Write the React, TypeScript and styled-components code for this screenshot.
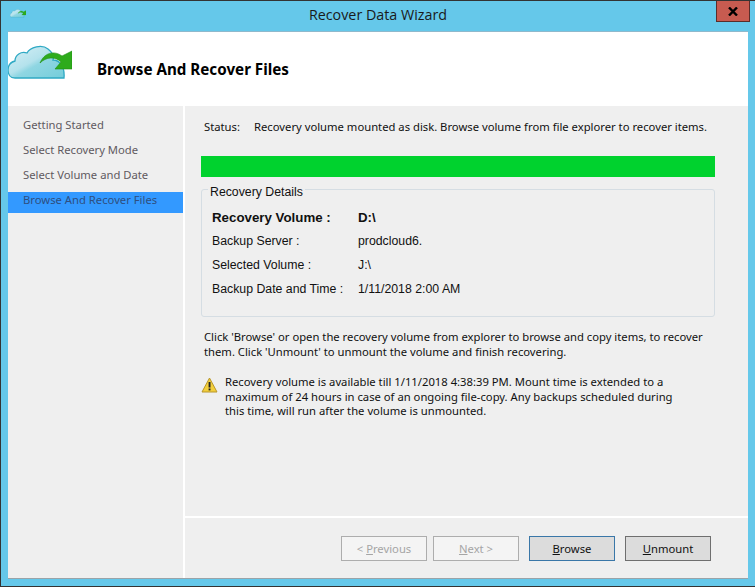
import { FC, Fragment } from 'react';
import styled, { createGlobalStyle } from 'styled-components';

const FRAME_BLUE = '#65c8ea';
const PANEL_GREY = '#efefef';
const UI_FONT = `'Noto Sans', 'Open Sans', sans-serif`;
const DETAIL_FONT = `'Liberation Sans', Arial, sans-serif`;

const GlobalStyle = createGlobalStyle`
  html, body {
    margin: 0;
    padding: 0;
    background: ${FRAME_BLUE};
  }
`;

const Window = styled.div`
  width: 755px;
  height: 587px;
  box-sizing: border-box;
  border: 1px solid #333;
  border-right: none;
  background: ${FRAME_BLUE};
  display: flex;
  flex-direction: column;
  overflow: hidden;
  font-family: ${UI_FONT};
`;

const TitleBar = styled.div`
  height: 30px;
  flex: none;
  display: grid;
  grid-template-columns: 1fr auto 1fr;
  align-items: start;
`;

const TitleIconSlot = styled.div`
  padding: 8px 0 0 9px;
  line-height: 0;
`;

const TitleText = styled.div`
  font-family: 'Open Sans', ${UI_FONT};
  font-size: 14.3px;
  line-height: 18px;
  margin-top: 5px;
  color: #1a1a1a;
`;

const CloseButton = styled.div`
  justify-self: end;
  margin-right: 5px;
  width: 34px;
  height: 21px;
  box-sizing: border-box;
  background: #c75b50;
  border: 1px solid #5a2d2a;
  border-top: none;
  display: flex;
  align-items: center;
  justify-content: center;
`;

const Client = styled.div`
  flex: 1;
  margin: 0 7px 7px 7px;
  border-top: 1px solid #8fb9cc;
  border-bottom: 1px solid #9aa3a8;
  background: #fff;
  display: flex;
  flex-direction: column;
  min-height: 0;
`;

const Header = styled.div`
  height: 74px;
  flex: none;
  display: flex;
  align-items: flex-start;
  background: #fff;
`;

const HeaderIconSlot = styled.div`
  width: 89px;
  padding-top: 13px;
  line-height: 0;
`;

const HeaderTitle = styled.h1`
  margin: 0;
  padding-top: 27px;
  font-family: ${UI_FONT};
  font-size: 15.2px;
  line-height: 20px;
  font-weight: 700;
  color: #000;
`;

const Body = styled.div`
  flex: 1;
  display: flex;
  gap: 2px;
  min-height: 0;
`;

const Sidebar = styled.nav`
  width: 175px;
  flex: none;
  background: ${PANEL_GREY};
  padding-top: 11px;
  box-sizing: border-box;
`;

const Step = styled.div<{ $active?: boolean }>`
  height: 21px;
  line-height: 16px;
  margin-bottom: 4px;
  padding-left: 15px;
  font-size: 11.25px;
  white-space: nowrap;
  color: ${({ $active }) => ($active ? '#2f4f80' : '#5f5a5f')};
  background: ${({ $active }) => ($active ? '#3399ff' : 'transparent')};
`;

const Main = styled.div`
  flex: 1;
  display: flex;
  flex-direction: column;
  min-width: 0;
`;

const Content = styled.div`
  flex: 1;
  background: ${PANEL_GREY};
  padding: 12px 33px 0 16px;
  font-size: 11.25px;
  color: #111;
`;

const StatusRow = styled.div`
  display: flex;
  line-height: 17px;
  padding-left: 3px;
  white-space: nowrap;
`;

const StatusLabel = styled.span`
  flex: none;
  width: 50px;
`;

const ProgressBar = styled.div`
  height: 21px;
  margin-top: 21px;
  background: #00d22e;
`;

const Details = styled.fieldset`
  margin: 7px 0 0;
  padding: 0 0 0 10px;
  height: 133px;
  box-sizing: border-box;
  border: 1px solid #d5dde3;
  border-radius: 3px;
  font-family: ${DETAIL_FONT};
  font-size: 12.3px;
  color: #111;
`;

const DetailsLegend = styled.legend`
  margin-left: -4px;
  padding: 0 2px;
  height: 10px;
  line-height: 16px;
  font-size: 12.3px;
`;

const DetailsGrid = styled.div`
  display: grid;
  grid-template-columns: 146px 1fr;
  grid-auto-rows: 24px;
  align-items: center;
  padding-top: 11px;
`;

const DetailCell = styled.div<{ $bold?: boolean }>`
  font-weight: ${({ $bold }) => ($bold ? 700 : 400)};
  font-size: ${({ $bold }) => ($bold ? '13.3px' : '12.3px')};
  white-space: nowrap;
`;

const Paragraph = styled.p`
  margin: 12px 0 0;
  padding-left: 3px;
  line-height: 15px;
  width: 512px;
`;

const Warning = styled.div`
  display: flex;
  margin-top: 16px;
`;

const WarningIconSlot = styled.div`
  width: 24px;
  flex: none;
  padding-top: 2px;
  line-height: 0;
`;

const WarningText = styled.div`
  line-height: 14.5px;
  width: 460px;
`;

const Footer = styled.div`
  height: 61px;
  flex: none;
  margin-top: 1px;
  border-top: 1px solid #fff;
  background: ${PANEL_GREY};
  box-sizing: border-box;
  padding: 18px 37px 0 0;
  display: flex;
  justify-content: flex-end;
`;

const WizardButton = styled.div<{ $disabled?: boolean; $focused?: boolean; $gap: number }>`
  width: 86px;
  height: 25px;
  box-sizing: border-box;
  margin-left: ${({ $gap }) => $gap}px;
  display: flex;
  align-items: center;
  justify-content: center;
  font-size: 11.25px;
  color: ${({ $disabled }) => ($disabled ? '#a5a5a5' : '#111')};
  background: ${({ $disabled }) => ($disabled ? '#f4f4f4' : '#dcdcdc')};
  border: 1px solid
    ${({ $disabled, $focused }) => ($disabled ? '#adadad' : $focused ? '#3a77a8' : '#6f6f6f')};
`;

const AccessKey = styled.span`
  text-decoration: underline;
`;

const CloudIcon: FC<{ size: number }> = ({ size }) => (
  <svg width={size} height={(size * 36) / 64} viewBox="0 0 64 36">
    <defs>
      <linearGradient id={`cloud${size}`} x1="0" y1="0" x2="1" y2="1">
        <stop offset="0" stopColor="#d8f0f6" />
        <stop offset="0.45" stopColor="#b4e2ec" />
        <stop offset="0.55" stopColor="#8fd6e2" />
        <stop offset="1" stopColor="#74cdda" />
      </linearGradient>
    </defs>
    <path
      d="M7 33 C2 33 0 29 0 25 C0 20 3 17 7 16 C7 10 13 6 19 8 C22 2 34 -1 40 4 C45 8 46 12 45 15 C52 15 57 22 56 33 Z"
      fill={`url(#cloud${size})`}
      stroke="#2fa9c4"
      strokeWidth="1.3"
    />
    <path
      d="M32 18 C36 8 46 5 54 11 L64 6 L64 24 L47 24 L53 17 C47 11 38 12 32 18 Z"
      fill="#2eab1c"
      stroke="#1f8f12"
      strokeWidth="0.6"
    />
  </svg>
);

const WarningIcon: FC = () => (
  <svg width="17" height="16" viewBox="0 0 17 16">
    <path d="M8.5 1 L16 15 L1 15 Z" fill="#f3cf3c" stroke="#b8962a" strokeLinejoin="round" />
    <rect x="7.6" y="5" width="1.9" height="5.5" fill="#222" />
    <rect x="7.6" y="11.5" width="1.9" height="1.9" fill="#222" />
  </svg>
);

const CloseGlyph: FC = () => (
  <svg width="10" height="9" viewBox="0 0 10 9">
    <path d="M1 0.5 L9 8.5 M9 0.5 L1 8.5" stroke="#000" strokeWidth="2.4" />
  </svg>
);

const steps = ['Getting Started', 'Select Recovery Mode', 'Select Volume and Date', 'Browse And Recover Files'];

const details = [
  { label: 'Recovery Volume :', value: 'D:\\', bold: true },
  { label: 'Backup Server :', value: 'prodcloud6.' },
  { label: 'Selected Volume :', value: 'J:\\' },
  { label: 'Backup Date and Time :', value: '1/11/2018 2:00 AM' },
];

const App: FC = () => {
  return (
    <>
      <GlobalStyle />
      <Window>
        <TitleBar>
          <TitleIconSlot>
            <CloudIcon size={16} />
          </TitleIconSlot>
          <TitleText>Recover Data Wizard</TitleText>
          <CloseButton>
            <CloseGlyph />
          </CloseButton>
        </TitleBar>
        <Client>
          <Header>
            <HeaderIconSlot>
              <CloudIcon size={64} />
            </HeaderIconSlot>
            <HeaderTitle>Browse And Recover Files</HeaderTitle>
          </Header>
          <Body>
            <Sidebar>
              {steps.map((step, i) => (
                <Step key={step} $active={i === steps.length - 1}>
                  {step}
                </Step>
              ))}
            </Sidebar>
            <Main>
              <Content>
                <StatusRow>
                  <StatusLabel>Status:</StatusLabel>
                  <span>Recovery volume mounted as disk. Browse volume from file explorer to recover items.</span>
                </StatusRow>
                <ProgressBar />
                <Details>
                  <DetailsLegend>Recovery Details</DetailsLegend>
                  <DetailsGrid>
                    {details.map((row) => (
                      <Fragment key={row.label}>
                        <DetailCell $bold={row.bold}>{row.label}</DetailCell>
                        <DetailCell $bold={row.bold}>{row.value}</DetailCell>
                      </Fragment>
                    ))}
                  </DetailsGrid>
                </Details>
                <Paragraph>
                  Click 'Browse' or open the recovery volume from explorer to browse and copy items, to recover them.
                  Click 'Unmount' to unmount the volume and finish recovering.
                </Paragraph>
                <Warning>
                  <WarningIconSlot>
                    <WarningIcon />
                  </WarningIconSlot>
                  <WarningText>
                    Recovery volume is available till 1/11/2018 4:38:39 PM. Mount time is extended to a maximum of 24
                    hours in case of an ongoing file-copy. Any backups scheduled during this time, will run after the
                    volume is unmounted.
                  </WarningText>
                </Warning>
              </Content>
              <Footer>
                <WizardButton $disabled $gap={0}>
                  &lt;&nbsp;<AccessKey>P</AccessKey>revious
                </WizardButton>
                <WizardButton $disabled $gap={6}>
                  <AccessKey>N</AccessKey>ext &gt;
                </WizardButton>
                <WizardButton $focused $gap={10}>
                  <AccessKey>B</AccessKey>rowse
                </WizardButton>
                <WizardButton $gap={10}>
                  <AccessKey>U</AccessKey>nmount
                </WizardButton>
              </Footer>
            </Main>
          </Body>
        </Client>
      </Window>
    </>
  );
};

export default App;
